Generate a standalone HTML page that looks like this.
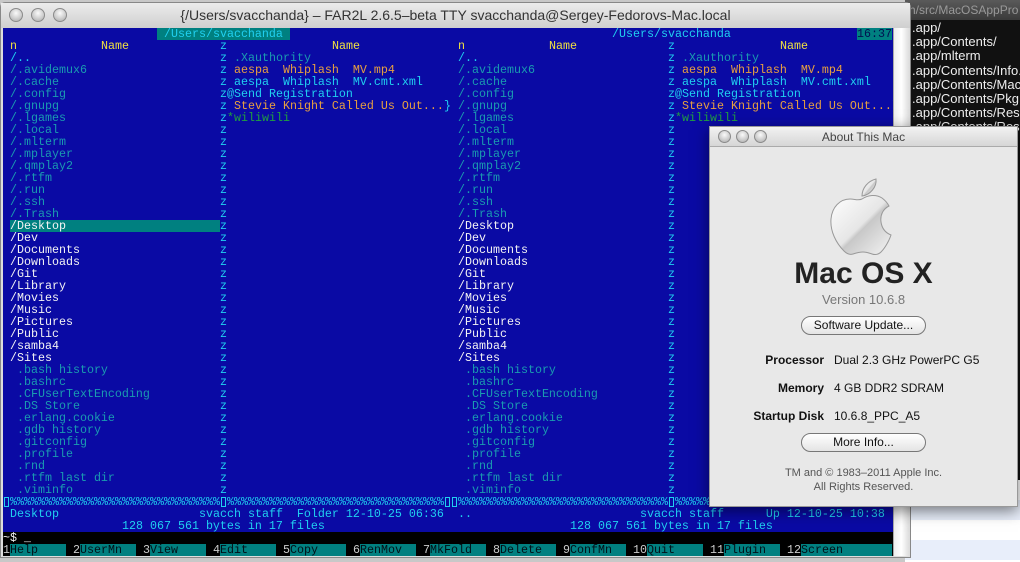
<!DOCTYPE html>
<html><head><meta charset="utf-8"><style>
*{margin:0;padding:0;box-sizing:border-box}
body{width:1020px;height:562px;overflow:hidden;background:#c8c8c8;position:relative;font-family:"Liberation Sans",sans-serif}
.abs{position:absolute}
#rt{left:905px;top:0;width:115px;height:562px;background:#111}
#rt .tb{position:absolute;left:0;top:0;width:115px;height:20px;background:linear-gradient(#5a5a5a,#3a3a3a);color:#999;font-size:12px;padding:3px 0 0 4px;white-space:nowrap;overflow:hidden}
#rt .ln{position:absolute;left:7px;color:#eee;font:13px "Liberation Sans",sans-serif;white-space:nowrap}
#rt .bot{position:absolute;left:0;top:480px;width:115px;height:82px;background:repeating-linear-gradient(#fff 0 20px,#e8eefa 20px 40px)}
#term{left:0;top:2px;width:911px;height:556px;background:#ddd;border:1px solid #888;border-radius:5px 5px 0 0}
#term .title{position:absolute;left:0;top:0;width:909px;height:25px;background:linear-gradient(#ececec,#cfcfcf);font-size:14px;color:#333;text-align:center;line-height:24px}
.tl{position:absolute;top:5px;width:14px;height:14px;border-radius:50%;background:radial-gradient(circle at 50% 35%,#fafafa,#aaa);border:1px solid #8a8a8a}
#scr{left:3px;top:28px;width:890px;height:528px;background:#0a0aa4;overflow:hidden;font:11.667px "Liberation Mono",monospace;white-space:pre;color:#20d0f0}
.r{position:absolute;left:0;height:12px;line-height:12px;width:890px}
.r span{position:absolute;top:0}
.c{color:#20d0f0}.d{color:#1a9cb0}.w{color:#f4f4f4}.y{color:#f0e040}.o{color:#e8a040}.g{color:#20a040}
.hl{background:#008080}
.bx{display:inline-block;width:5px;height:10px;border:1px solid #20d0f0;margin-top:1px}
#sb{left:893px;top:28px;width:16px;height:528px;background:linear-gradient(90deg,#eee,#fff,#ddd);border-left:1px solid #aaa}
#about{left:709px;top:126px;width:309px;height:381px;background:#e8e8e8;border:1px solid #999;box-shadow:0 4px 14px rgba(0,0,0,.5)}
#about .title{height:20px;background:linear-gradient(#f2f2f2,#d6d6d6);border-bottom:1px solid #aaa;text-align:center;font-size:12px;color:#444;line-height:20px}
#about .tl{top:3px;width:13px;height:13px}
.ctr{position:absolute;left:0;width:307px;text-align:center}
.btn{position:absolute;left:91px;width:125px;height:19px;border:1px solid #777;border-radius:10px;background:linear-gradient(#fff,#e4e4e4);text-align:center;font-size:12px;line-height:17px;color:#111}
.lab{position:absolute;right:193px;font-weight:bold;font-size:12px;color:#111;white-space:nowrap}
.val{position:absolute;left:124px;font-size:12px;color:#111;white-space:nowrap}
</style></head><body>

<div id="rt" class="abs">
<div class="tb">h/src/MacOSAppPro</div>
<div class="ln" style="top:20px">.app/</div>
<div class="ln" style="top:34px">.app/Contents/</div>
<div class="ln" style="top:48px">.app/mlterm</div>
<div class="ln" style="top:63px">.app/Contents/Info.</div>
<div class="ln" style="top:77px">.app/Contents/MacOS</div>
<div class="ln" style="top:91px">.app/Contents/PkgIn</div>
<div class="ln" style="top:105px">.app/Contents/Resou</div>
<div class="ln" style="top:119px">.app/Contents/Resou</div>
<div class="bot"></div>
</div>

<div id="term" class="abs">
<div class="title">{/Users/svacchanda} – FAR2L 2.6.5–beta TTY svacchanda@Sergey-Fedorovs-Mac.local</div>
<div class="tl" style="left:8px"></div><div class="tl" style="left:30px"></div><div class="tl" style="left:52px"></div>
</div>
<div id="sb" class="abs"></div>

<div id="scr" class="abs">
<div class="r" style="top:0"><span class="hl c" style="left:154px"> /Users/svacchanda </span><span class="c" style="left:609px">/Users/svacchanda</span><span class="hl" style="left:854px;color:#001050">16:37</span></div>
<div class="r" style="top:12px"><span class="y" style="left:7px">n</span><span class="y" style="left:98px">Name</span><span class="c" style="left:217px">z</span><span class="y" style="left:329px">Name</span><span class="y" style="left:455px">n</span><span class="y" style="left:546px">Name</span><span class="c" style="left:665px">z</span><span class="y" style="left:777px">Name</span></div>
<div id="rows"></div>
<div class="r" style="top:468px" id="sep"></div>
<div class="r" style="top:480px"><span class="c" style="left:7px">Desktop</span><span class="c" style="left:196px">svacch staff  Folder 12-10-25 06:36</span><span class="c" style="left:455px">..</span><span class="c" style="left:637px">svacch staff      Up 12-10-25 10:38</span></div>
<div class="r" style="top:492px"><span class="c" style="left:119px">128 067 561 bytes in 17 files</span><span class="c" style="left:567px">128 067 561 bytes in 17 files</span></div>
<div class="r" style="top:504px;background:#000"><span class="w" style="left:0">~$ _</span></div>
<div class="r" style="top:516px;background:#000" id="kb"></div>
</div>

<div id="about" class="abs">
<div class="title">About This Mac</div>
<div class="tl" style="left:8px"></div><div class="tl" style="left:26px"></div><div class="tl" style="left:44px"></div>
<svg class="abs" style="left:118px;top:50px" width="68" height="80" viewBox="0 0 68 80">
<defs><linearGradient id="ag" x1="0" y1="0" x2="1" y2="1"><stop offset="0" stop-color="#fff"/><stop offset=".5" stop-color="#e6e6e6"/><stop offset=".55" stop-color="#c8c8c8"/><stop offset="1" stop-color="#f4f4f4"/></linearGradient></defs>
<path d="M34 22c6-4 14-5 20-1 4 3 6 6 7 8-6 3-9 9-8 16 1 7 5 11 10 13-2 6-6 13-10 17-3 3-6 3-9 2-3-1-5-2-9-2s-7 1-10 2c-3 1-6 0-9-3C8 66 2 54 3 42 4 30 12 22 22 22c5 0 8 2 12 0z" fill="url(#ag)" stroke="#999" stroke-width="1"/>
<path d="M34 19c0-8 6-15 14-17 1 8-6 16-14 17z" fill="url(#ag)" stroke="#999" stroke-width="1"/>
</svg>
<div class="ctr" style="top:130px;font-size:30px;font-weight:bold;color:#222">Mac OS X</div>
<div class="ctr" style="top:165px;font-size:13px;color:#777">Version 10.6.8</div>
<div class="btn" style="top:189px">Software Update...</div>
<div class="lab" style="top:226px">Processor</div><div class="val" style="top:226px">Dual 2.3 GHz PowerPC G5</div>
<div class="lab" style="top:254px">Memory</div><div class="val" style="top:254px">4 GB DDR2 SDRAM</div>
<div class="lab" style="top:282px">Startup Disk</div><div class="val" style="top:282px">10.6.8_PPC_A5</div>
<div class="btn" style="top:306px">More Info...</div>
<div class="ctr" style="top:340px;font-size:11px;color:#555">TM and © 1983–2011 Apple Inc.</div>
<div class="ctr" style="top:354px;font-size:11px;color:#555">All Rights Reserved.</div>
</div>

<script>
var L=[["/..","c"],["/.avidemux6","d"],["/.cache","d"],["/.config","d"],["/.gnupg","d"],["/.lgames","d"],["/.local","d"],["/.mlterm","d"],["/.mplayer","d"],["/.qmplay2","d"],["/.rtfm","d"],["/.run","d"],["/.ssh","d"],["/.Trash","d"],["/Desktop","w"],["/Dev","w"],["/Documents","w"],["/Downloads","w"],["/Git","w"],["/Library","w"],["/Movies","w"],["/Music","w"],["/Pictures","w"],["/Public","w"],["/samba4","w"],["/Sites","w"],[" .bash history","d"],[" .bashrc","d"],[" .CFUserTextEncoding","d"],[" .DS Store","d"],[" .erlang.cookie","d"],[" .gdb history","d"],[" .gitconfig","d"],[" .profile","d"],[" .rnd","d"],[" .rtfm last dir","d"],[" .viminfo","d"]];
var R={0:[[" .Xauthority","d"]],1:[[" aespa  Whiplash  MV.mp4","o"]],2:[[" aespa  Whiplash  MV.cmt.xml","c"]],3:[["@Send Registration","c"]],4:[[" Stevie Knight Called Us Out...","o"],["}","c",31]],5:[["*wiliwili","g"]]};
var h="",cw=7.0;
function sp(col,t,c,ex){return '<span class="'+c+'" style="left:'+(col*cw)+'px;'+(ex||'')+'">'+t+'</span>';}
for(var i=0;i<L.length;i++){
 var ty=24+i*12,s="";
 for(var p=0;p<2;p++){
  var o=p*64;
  if(p==0&&i==14) s+=sp(o+1,"/Desktop                      ","w hl");
  else s+=sp(o+1,L[i][0],L[i][1]);
  s+=sp(o+31,"z","c");
  if(R[i]) R[i].forEach(function(e){s+=sp(o+32+(e[2]||0),e[0],e[1]);});
 }
 h+='<div class="r" style="top:'+ty+'px">'+s+'</div>';
}
document.getElementById("rows").outerHTML=h;
var sepS="";
for(var j=0;j<127;j++){
 if(j==0||j==31||j==63||j==64||j==95) sepS+='<span style="left:'+(j*cw+1)+'px"><i class="bx"></i></span>';
 else sepS+=sp(j,"%","c");
}
document.getElementById("sep").innerHTML=sepS;
var K=[["1","Help",0],["2","UserMn",10],["3","View",20],["4","Edit",30],["5","Copy",40],["6","RenMov",50],["7","MkFold",60],["8","Delete",70],["9","ConfMn",80],["10","Quit",90],["11","Plugin",101],["12","Screen",112]];
var k="";
K.forEach(function(e,j){var st=e[2]+e[0].length;var en=j<11?K[j+1][2]:127;var lab=e[1];while(lab.length<en-st-(j<11?1:0))lab+=" ";
k+=sp(e[2],e[0],"w","color:#ccc")+sp(st,lab,"","background:#008080;color:#001018");});
document.getElementById("kb").innerHTML=k;
</script>
</body></html>
